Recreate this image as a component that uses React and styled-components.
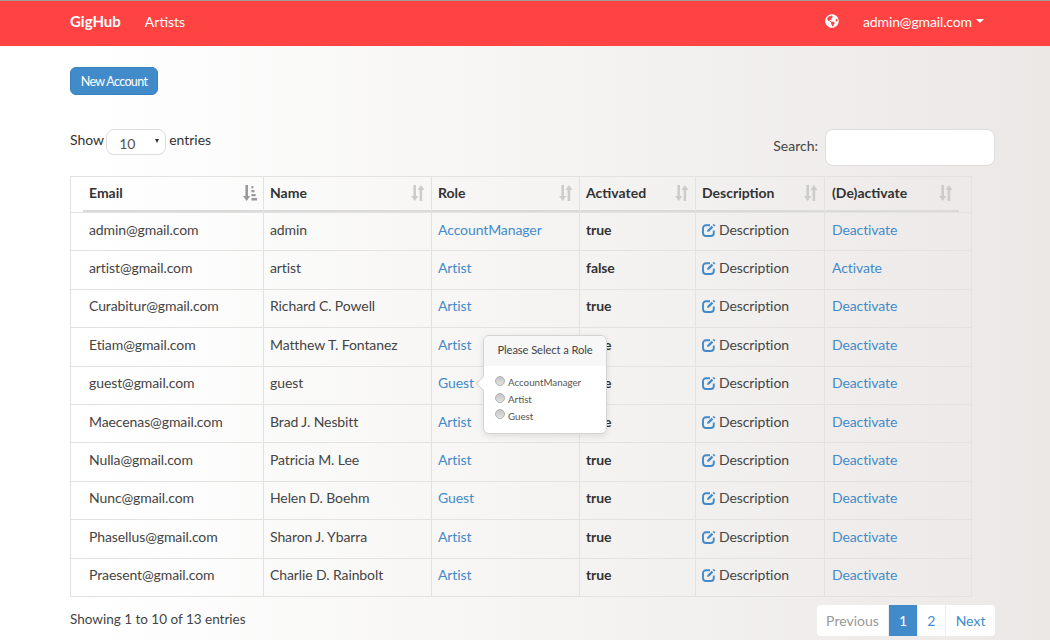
import React from "react";
import styled, { createGlobalStyle } from "styled-components";
import { FaGlobeAmericas } from "react-icons/fa";

const GlobalStyle = createGlobalStyle`
  html, body {
    margin: 0;
    padding: 0;
    height: 640px;
    overflow: hidden;
  }
  body {
    font-family: Lato, "Liberation Sans", sans-serif;
    font-size: 14px;
    color: #333;
    background: linear-gradient(to right, #ffffff 8%, #ebe8e6 100%);
  }
`;

const rows = [
  ["admin@gmail.com", "admin", "AccountManager", "true", "Deactivate"],
  ["artist@gmail.com", "artist", "Artist", "false", "Activate"],
  ["Curabitur@gmail.com", "Richard C. Powell", "Artist", "true", "Deactivate"],
  ["Etiam@gmail.com", "Matthew T. Fontanez", "Artist", "true", "Deactivate"],
  ["guest@gmail.com", "guest", "Guest", "true", "Deactivate"],
  ["Maecenas@gmail.com", "Brad J. Nesbitt", "Artist", "true", "Deactivate"],
  ["Nulla@gmail.com", "Patricia M. Lee", "Artist", "true", "Deactivate"],
  ["Nunc@gmail.com", "Helen D. Boehm", "Guest", "true", "Deactivate"],
  ["Phasellus@gmail.com", "Sharon J. Ybarra", "Artist", "true", "Deactivate"],
  ["Praesent@gmail.com", "Charlie D. Rainbolt", "Artist", "true", "Deactivate"],
];

const columns = [
  { label: "Email", width: 193, sorted: true, first: true },
  { label: "Name", width: 168 },
  { label: "Role", width: 148 },
  { label: "Activated", width: 116 },
  { label: "Description", width: 129 },
  { label: "(De)activate", width: 147, last: true },
];

function SortIcon({ sorted }) {
  return (
    <SortSvg width="14" height="16" viewBox="0 0 14 16" $sorted={sorted}>
      <path d="M2.4 0h2.6v11h2.3L3.7 16 0 11h2.4z" />
      {sorted ? (
        <path d="M8.4 1h2v2.2h-2zM8.4 5h3v2.2h-3zM8.4 9h4.2v2.2H8.4zM8.4 13H14v2.4H8.4z" />
      ) : (
        <path d="M8.6 16h2.6V5h2.4L9.9 0 6.4 5h2.2z" />
      )}
    </SortSvg>
  );
}

function EditGlyph() {
  return (
    <EditSvg width="14" height="14" viewBox="0 0 14 14">
      <path
        d="M8 2.2H4A3 3 0 0 0 1 5.2v4.8a3 3 0 0 0 3 3h4.8a3 3 0 0 0 3-3V7.4"
        fill="none"
        stroke="currentColor"
        strokeWidth="1.9"
      />
      <path d="M5.4 6.9 9.6 2.8l1.7 1.7-4.2 4.1-2 .3z" fill="currentColor" />
      <path d="M10.6 1.9 11.7.8l1.7 1.7-1.1 1.1z" fill="currentColor" />
    </EditSvg>
  );
}

function RolePopover() {
  return (
    <Popover>
      <PopoverTitle>Please Select a Role</PopoverTitle>
      <PopoverBody>
        {["AccountManager", "Artist", "Guest"].map((role) => (
          <RoleOption key={role}>
            <RoleRadio type="radio" name="role" />
            {role}
          </RoleOption>
        ))}
      </PopoverBody>
    </Popover>
  );
}

export default function App() {
  return (
    <>
      <GlobalStyle />
      <Navbar>
        <NavGroup>
          <Brand href="#">GigHub</Brand>
          <NavLink href="#">Artists</NavLink>
        </NavGroup>
        <NavGroup>
          <GlobeLink href="#">
            <FaGlobeAmericas />
          </GlobeLink>
          <UserLink href="#">
            admin@gmail.com
            <Caret />
          </UserLink>
        </NavGroup>
      </Navbar>
      <Page>
        <PrimaryButton>New Account</PrimaryButton>
        <Controls>
          <LengthLabel>
            Show
            <SelectBox>
              <span>10</span>
              <SelectArrow />
            </SelectBox>
            entries
          </LengthLabel>
          <SearchLabel>
            <SearchText>Search:</SearchText>
            <SearchInput type="search" />
          </SearchLabel>
        </Controls>
        <Table>
          <colgroup>
            {columns.map((col) => (
              <col key={col.label} style={{ width: col.width }} />
            ))}
          </colgroup>
          <thead>
            <tr>
              {columns.map((col) => (
                <HeadCell key={col.label}>
                  <HeadInner $first={col.first} $last={col.last}>
                    {col.label}
                    <SortIcon sorted={col.sorted} />
                  </HeadInner>
                </HeadCell>
              ))}
            </tr>
          </thead>
          <tbody>
            {rows.map(([email, name, role, active, action]) => (
              <tr key={email}>
                <EmailCell>{email}</EmailCell>
                <Cell>{name}</Cell>
                <RoleCell>
                  <TableLink href="#">{role}</TableLink>
                  {email === "guest@gmail.com" && <RolePopover />}
                </RoleCell>
                <StatusCell>{active}</StatusCell>
                <Cell>
                  <EditGlyph />
                  Description
                </Cell>
                <ActionCell>
                  <TableLink href="#">{action}</TableLink>
                </ActionCell>
              </tr>
            ))}
          </tbody>
        </Table>
        <Footer>
          <span>Showing 1 to 10 of 13 entries</span>
          <Pagination>
            <PageItem $disabled>Previous</PageItem>
            <PageItem $active>1</PageItem>
            <PageItem>2</PageItem>
            <PageItem>Next</PageItem>
          </Pagination>
        </Footer>
      </Page>
    </>
  );
}

const Navbar = styled.nav`
  height: 40px;
  padding: 0 66px 5px 70px;
  border-top: 1px solid #a89a9a;
  background: #ff4242;
  display: flex;
  align-items: center;
  justify-content: space-between;
`;

const NavGroup = styled.div`
  display: flex;
  align-items: center;
`;

const Brand = styled.a`
  color: #fff;
  font-size: 15px;
  font-weight: 700;
  text-decoration: none;
  margin-right: 24px;
`;

const NavLink = styled.a`
  color: #fff;
  font-size: 14px;
  text-decoration: none;
  display: flex;
  align-items: center;
`;

const UserLink = styled(NavLink)`
  letter-spacing: -0.13px;
`;

const GlobeLink = styled.a`
  color: #fff;
  font-size: 14px;
  display: flex;
  margin-right: 24px;
`;

const Caret = styled.span`
  width: 0;
  height: 0;
  margin-left: 4px;
  border-top: 4px solid #fff;
  border-left: 4px solid transparent;
  border-right: 4px solid transparent;
`;

const Page = styled.main`
  padding: 21px 55px 0 70px;
`;

const PrimaryButton = styled.button`
  display: block;
  width: 88px;
  height: 28px;
  padding: 0;
  border: 1px solid #3a7fbd;
  border-radius: 6px;
  background: #428bca;
  color: #fff;
  font-family: inherit;
  font-size: 12.5px;
  letter-spacing: -0.65px;
`;

const Controls = styled.div`
  display: flex;
  justify-content: space-between;
  align-items: flex-start;
  margin-top: 34px;
`;

const LengthLabel = styled.label`
  display: flex;
  align-items: flex-start;
  gap: 2px;
  line-height: 22px;
`;

const SelectBox = styled.div`
  width: 60px;
  height: 26px;
  margin-right: 1px;
  box-sizing: border-box;
  border: 1px solid #ddd;
  border-radius: 8px;
  background: #fff;
  display: flex;
  align-items: center;
  justify-content: space-between;
  padding: 3px 6px 0 12px;
  font-size: 14px;
  color: #555;
`;

const SelectArrow = styled.span`
  width: 0;
  height: 0;
  margin-top: -5px;
  border-top: 4px solid #333;
  border-left: 2.5px solid transparent;
  border-right: 2.5px solid transparent;
`;

const SearchLabel = styled.label`
  display: flex;
  align-items: center;
  gap: 7px;
  color: #444;
`;

const SearchText = styled.span`
  padding-bottom: 4px;
`;

const SearchInput = styled.input`
  width: 170px;
  height: 37px;
  box-sizing: border-box;
  border: 1px solid #ddd;
  border-radius: 8px;
  background: #fff;
  outline: none;
`;

const Table = styled.table`
  width: 901px;
  margin-top: 10px;
  table-layout: fixed;
  border-collapse: collapse;
  border: 1px solid #e4e2e0;
`;

const HeadCell = styled.th`
  height: 35px;
  padding: 0;
  border-left: 1px solid #e4e2e0;
  text-align: left;
  vertical-align: top;
`;

const HeadInner = styled.div`
  height: 35px;
  box-sizing: border-box;
  margin-left: ${(p) => (p.$first ? "12px" : "0")};
  margin-right: ${(p) => (p.$last ? "12px" : "0")};
  padding: 0 6px 2px ${(p) => (p.$last ? "7px" : "6px")};
  border-bottom: 2px solid #dadada;
  display: flex;
  align-items: center;
  justify-content: space-between;
  font-weight: 700;
  font-size: 14px;
  color: #333;
`;

const SortSvg = styled.svg`
  fill: ${(p) => (p.$sorted ? "#999" : "#ccc")};
  flex: none;
`;

const Cell = styled.td`
  box-sizing: border-box;
  height: 38.4px;
  padding: 0 6px 5px;
  border: 1px solid #e4e2e0;
  color: #444;
  letter-spacing: -0.1px;
  white-space: nowrap;
`;

const EmailCell = styled(Cell)`
  padding-left: 18px;
`;

const RoleCell = styled(Cell)`
  position: relative;
`;

const StatusCell = styled(Cell)`
  font-weight: 700;
  color: #333;
`;

const ActionCell = styled(Cell)`
  padding-left: 7px;
`;

const TableLink = styled.a`
  color: #428bca;
  text-decoration: none;
`;

const EditSvg = styled.svg`
  color: #428bca;
  margin-right: 3px;
  vertical-align: -2px;
`;

const Popover = styled.div`
  position: absolute;
  left: 51px;
  top: -31.5px;
  z-index: 2;
  width: 124px;
  height: 99px;
  box-sizing: border-box;
  border: 1px solid #d4d4d4;
  border-radius: 6px;
  background: #fff;
  box-shadow: 0 2px 6px rgba(0, 0, 0, 0.1);
  &::before {
    content: "";
    position: absolute;
    left: -6px;
    top: 42px;
    width: 10px;
    height: 10px;
    background: #fff;
    border-left: 1px solid #d4d4d4;
    border-bottom: 1px solid #d4d4d4;
    transform: rotate(45deg);
  }
`;

const PopoverTitle = styled.div`
  height: 30px;
  line-height: 27px;
  text-align: center;
  font-size: 11.2px;
  color: #444;
  background: #f7f7f7;
  border-radius: 6px 6px 0 0;
`;

const PopoverBody = styled.div`
  padding: 8px 11px;
  position: relative;
`;

const RoleOption = styled.label`
  display: flex;
  align-items: center;
  gap: 3px;
  height: 16.7px;
  font-size: 9.75px;
  letter-spacing: 0;
  color: #555;
`;

const RoleRadio = styled.input`
  appearance: none;
  width: 10px;
  height: 10px;
  margin: -3px 0 0;
  border: 1px solid #b4b4b4;
  border-radius: 50%;
  background: linear-gradient(#c4c4c4, #e2e2e2);
`;

const Footer = styled.div`
  display: flex;
  justify-content: space-between;
  align-items: flex-start;
  margin-top: 8px;
  color: #444;
  font-size: 13.5px;
  line-height: 28px;
`;

const Pagination = styled.div`
  display: flex;
  height: 31px;
  border-radius: 4px;
  background: #fff;
  overflow: hidden;
  font-size: 14px;
`;

const PageItem = styled.span`
  padding: 0 9.6px;
  line-height: 31px;
  text-align: center;
  border-left: 1px solid #eee;
  background: ${(p) => (p.$active ? "#428bca" : "transparent")};
  color: ${(p) => (p.$active ? "#fff" : p.$disabled ? "#999" : "#428bca")};
  &:first-child {
    border-left: 0;
  }
`;
